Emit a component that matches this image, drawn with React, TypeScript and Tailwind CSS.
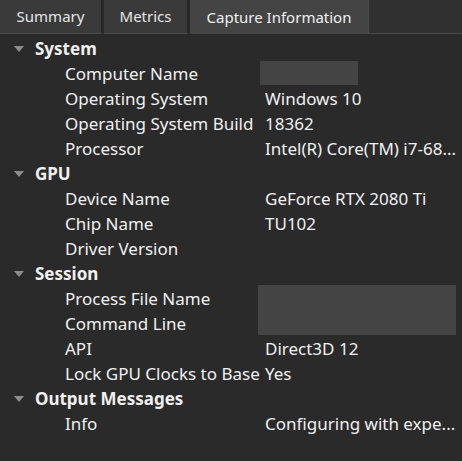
const sections = [
  {
    name: 'System',
    rows: [
      { label: 'Computer Name', redact: 'small' },
      { label: 'Operating System', value: 'Windows 10' },
      { label: 'Operating System Build', value: '18362' },
      { label: 'Processor', value: 'Intel(R) Core(TM) i7-68...' },
    ],
  },
  {
    name: 'GPU',
    rows: [
      { label: 'Device Name', value: 'GeForce RTX 2080 Ti' },
      { label: 'Chip Name', value: 'TU102' },
      { label: 'Driver Version', value: '' },
    ],
  },
  {
    name: 'Session',
    rows: [
      { label: 'Process File Name', redact: 'big' },
      { label: 'Command Line' },
      { label: 'API', value: 'Direct3D 12' },
      { label: 'Lock GPU Clocks to Base', value: 'Yes' },
    ],
  },
  {
    name: 'Output Messages',
    rows: [{ label: 'Info', value: 'Configuring with expe...' }],
  },
];

type Row = { label: string; value?: string; redact?: string };

function Caret() {
  return (
    <svg width="10" height="6" viewBox="0 0 10 6" className="shrink-0">
      <polygon points="0,0 10,0 5,6" fill="#8c8c8c" />
    </svg>
  );
}

function DataRow({ row }: { row: Row }) {
  return (
    <div className="relative flex h-[25px] items-center">
      <div className="w-[265px] shrink-0 whitespace-nowrap pl-[65px]">{row.label}</div>
      <div className="whitespace-nowrap">{row.value}</div>
      {row.redact === 'small' && (
        <div className="absolute left-[260px] top-[0px] h-[24px] w-[98px] bg-[#444444]" />
      )}
      {row.redact === 'big' && (
        <div className="absolute left-[258px] top-[-1px] z-10 h-[50px] w-[198px] bg-[#444444]" />
      )}
    </div>
  );
}

export default function App() {
  return (
    <div
      className="h-[461px] w-[462px] overflow-hidden bg-[#2a2a2a] text-[17px] text-[#f0f0f0]"
      style={{ fontFamily: '"Segoe UI", "Noto Sans", sans-serif' }}
    >
      <div className="flex h-[34px] text-[15px]">
        <div className="flex w-[103px] items-center justify-center border-r-2 border-b border-[#262626] border-b-[#4a4a4a] bg-[#3a3a3a] text-[#e6e6e6]">
          Summary
        </div>
        <div className="ml-[1px] flex w-[85px] items-center justify-center border-r-2 border-b border-[#262626] border-b-[#4a4a4a] bg-[#3a3a3a] text-[#e6e6e6]">
          Metrics
        </div>
        <div className="ml-[1px] flex w-[178px] items-center justify-center bg-[#444444] text-[#f0f0f0]">
          Capture Information
        </div>
        <div className="flex-1 border-b border-l border-[#4a4a4a] bg-[#303030]" />
      </div>
      <div className="pt-[2px]">
        {sections.map((s) => (
          <div key={s.name}>
            <div className="flex h-[25px] items-center">
              <div className="flex w-[35px] justify-center pl-[2px]">
                <Caret />
              </div>
              <span className="font-bold">{s.name}</span>
            </div>
            {s.rows.map((r) => (
              <DataRow key={r.label} row={r} />
            ))}
          </div>
        ))}
      </div>
    </div>
  );
}
